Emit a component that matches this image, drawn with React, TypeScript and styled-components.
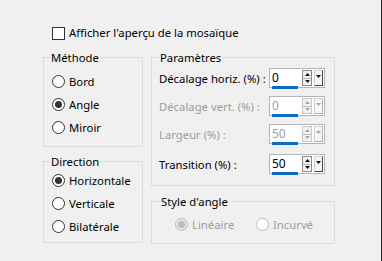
import React from "react";
import styled, { createGlobalStyle } from "styled-components";

const GlobalStyle = createGlobalStyle`
  html, body {
    margin: 0;
    padding: 0;
    background: #f0f0f0;
  }
  body {
    font-family: "Noto Sans", "Open Sans", sans-serif;
    font-size: 11.3px;
    color: #000;
  }
`;

const Dialog = styled.div`
  box-sizing: border-box;
  width: 382px;
  height: 261px;
  background: #f0f0f0;
  border-right: 1px solid #2b2b2b;
  padding: 25px 0 0 43px;
  display: flex;
  flex-direction: column;
`;

const CheckRow = styled.label`
  display: flex;
  align-items: center;
  gap: 4px;
  height: 16px;
  margin-left: 9px;
  line-height: 16px;
`;

const CheckBox = styled.span`
  box-sizing: border-box;
  width: 13px;
  height: 13px;
  border: 1px solid #333;
  background: #fff;
`;

const Columns = styled.div`
  display: flex;
  gap: 8px;
  margin-top: 9px;
`;

const Column = styled.div<{ $w: number; $gap: number }>`
  display: flex;
  flex-direction: column;
  width: ${(p) => p.$w}px;
  gap: ${(p) => p.$gap}px;
`;

const Group = styled.fieldset<{ $h: number; $top: number; $left?: number }>`
  box-sizing: border-box;
  margin: 0;
  min-width: 0;
  height: ${(p) => p.$h}px;
  padding: ${(p) => p.$top}px 9px 0 ${(p) => p.$left ?? 8}px;
  border: 1px solid #dcdcdc;
  display: flex;
  flex-direction: column;
`;

const Legend = styled.legend<{ $off: number }>`
  margin-left: ${(p) => p.$off}px;
  padding: 0 1px;
  line-height: 15px;
`;

const RadioRow = styled.label<{ $disabled?: boolean; $w?: number }>`
  display: flex;
  align-items: center;
  gap: 4px;
  height: 23px;
  width: ${(p) => (p.$w ? `${p.$w}px` : "auto")};
  color: ${(p) => (p.$disabled ? "#9d9d9d" : "#000")};
`;

const RadioDot = styled.span<{ $checked?: boolean; $disabled?: boolean }>`
  box-sizing: border-box;
  width: 13px;
  height: 13px;
  border-radius: 50%;
  border: 1px solid ${(p) => (p.$disabled ? "#bcbcbc" : "#333")};
  background: ${(p) => (p.$disabled && p.$checked ? "#e5e5e5" : "#fff")};
  display: flex;
  align-items: center;
  justify-content: center;

  &::after {
    content: "";
    display: ${(p) => (p.$checked ? "block" : "none")};
    width: 7px;
    height: 7px;
    border-radius: 50%;
    background: ${(p) => (p.$disabled ? "#bcbcbc" : "#333")};
  }
`;

const RadioLine = styled.div`
  display: flex;
  height: 18px;
  margin-top: 4px;
  padding-left: 15px;
`;

const ParamRow = styled.div<{ $disabled?: boolean; $mt: number }>`
  display: flex;
  align-items: center;
  height: 20px;
  margin-top: ${(p) => p.$mt}px;
  color: ${(p) => (p.$disabled ? "#9d9d9d" : "#000")};
`;

const ParamLabel = styled.span`
  flex: 1;
  white-space: nowrap;
`;

const Spin = styled.div`
  box-sizing: border-box;
  display: flex;
  align-items: center;
  width: 56px;
  height: 20px;
  border: 1px solid #b4b4b4;
  background: #fff;
`;

const Field = styled.div<{ $disabled?: boolean }>`
  position: relative;
  width: 28px;
  height: 18px;
  padding-left: 2px;
  box-sizing: border-box;
  line-height: 18px;
  font-size: 12px;
  color: ${(p) => (p.$disabled ? "#9d9d9d" : "#000")};

  &::after {
    content: "";
    position: absolute;
    left: 2px;
    right: 0;
    bottom: -2px;
    height: 3px;
    background: #0a6fc2;
  }
`;

const UpDown = styled.div<{ $disabled?: boolean }>`
  box-sizing: border-box;
  display: flex;
  flex-direction: column;
  width: 10px;
  height: 16px;
  margin-left: 4px;
  border: 1px solid ${(p) => (p.$disabled ? "#c8c8c8" : "#8c8c8c")};
  background: #f2f2f2;
`;

const Half = styled.div<{ $bottom?: boolean }>`
  flex: 1;
  display: flex;
  align-items: center;
  justify-content: center;
  border-top: ${(p) => (p.$bottom ? "1px solid #b8b8b8" : "none")};
`;

const DropBtn = styled.div<{ $disabled?: boolean }>`
  box-sizing: border-box;
  display: flex;
  justify-content: center;
  padding-top: 4px;
  width: 9px;
  height: 16px;
  margin-left: 2px;
  border: 1px solid #d0d0d0;
  border-right-color: ${(p) => (p.$disabled ? "#b0b0b0" : "#444")};
  border-bottom-color: ${(p) => (p.$disabled ? "#b0b0b0" : "#444")};
  background: #f6f6f6;
`;

const Tri = ({ up, color }: { up?: boolean; color: string }) => (
  <svg width="5" height="3" viewBox="0 0 5 3">
    <path d={up ? "M0 3 L2.5 0 L5 3 Z" : "M0 0 L5 0 L2.5 3 Z"} fill={color} />
  </svg>
);

const SpinBox = ({ value, disabled }: { value: string; disabled?: boolean }) => {
  const c = disabled ? "#a8a8a8" : "#111";
  return (
    <Spin>
      <Field $disabled={disabled}>{value}</Field>
      <UpDown $disabled={disabled}>
        <Half>
          <Tri up color={c} />
        </Half>
        <Half $bottom>
          <Tri color={c} />
        </Half>
      </UpDown>
      <DropBtn $disabled={disabled}>
        <Tri color={c} />
      </DropBtn>
    </Spin>
  );
};

const Radio = ({
  label,
  checked,
  disabled,
  w,
}: {
  label: string;
  checked?: boolean;
  disabled?: boolean;
  w?: number;
}) => (
  <RadioRow $disabled={disabled} $w={w}>
    <RadioDot $checked={checked} $disabled={disabled} />
    {label}
  </RadioRow>
);

const params = [
  { label: "Décalage horiz. (%) :", value: "0", disabled: false, mt: 3 },
  { label: "Décalage vert. (%) :", value: "0", disabled: true, mt: 8 },
  { label: "Largeur (%) :", value: "50", disabled: true, mt: 8 },
  { label: "Transition (%) :", value: "50", disabled: false, mt: 10 },
];

export default function App() {
  return (
    <>
      <GlobalStyle />
      <Dialog>
        <CheckRow>
          <CheckBox />
          Afficher l'aperçu de la mosaïque
        </CheckRow>
        <Columns>
          <Column $w={100} $gap={7}>
            <Group $h={97} $top={5}>
              <Legend $off={-2}>Méthode</Legend>
              <Radio label="Bord" />
              <Radio label="Angle" checked />
              <Radio label="Miroir" />
            </Group>
            <Group $h={89} $top={0}>
              <Legend $off={-2}>Direction</Legend>
              <Radio label="Horizontale" checked />
              <Radio label="Verticale" />
              <Radio label="Bilatérale" />
            </Group>
          </Column>
          <Column $w={184} $gap={8}>
            <Group $h={136} $top={0} $left={7}>
              <Legend $off={0}>Paramètres</Legend>
              {params.map((p) => (
                <ParamRow key={p.label} $disabled={p.disabled} $mt={p.mt}>
                  <ParamLabel>{p.label}</ParamLabel>
                  <SpinBox value={p.value} disabled={p.disabled} />
                </ParamRow>
              ))}
            </Group>
            <Group $h={50} $top={0} $left={8}>
              <Legend $off={0}>Style d'angle</Legend>
              <RadioLine>
                <Radio label="Linéaire" checked disabled w={81} />
                <Radio label="Incurvé" disabled />
              </RadioLine>
            </Group>
          </Column>
        </Columns>
      </Dialog>
    </>
  );
}
